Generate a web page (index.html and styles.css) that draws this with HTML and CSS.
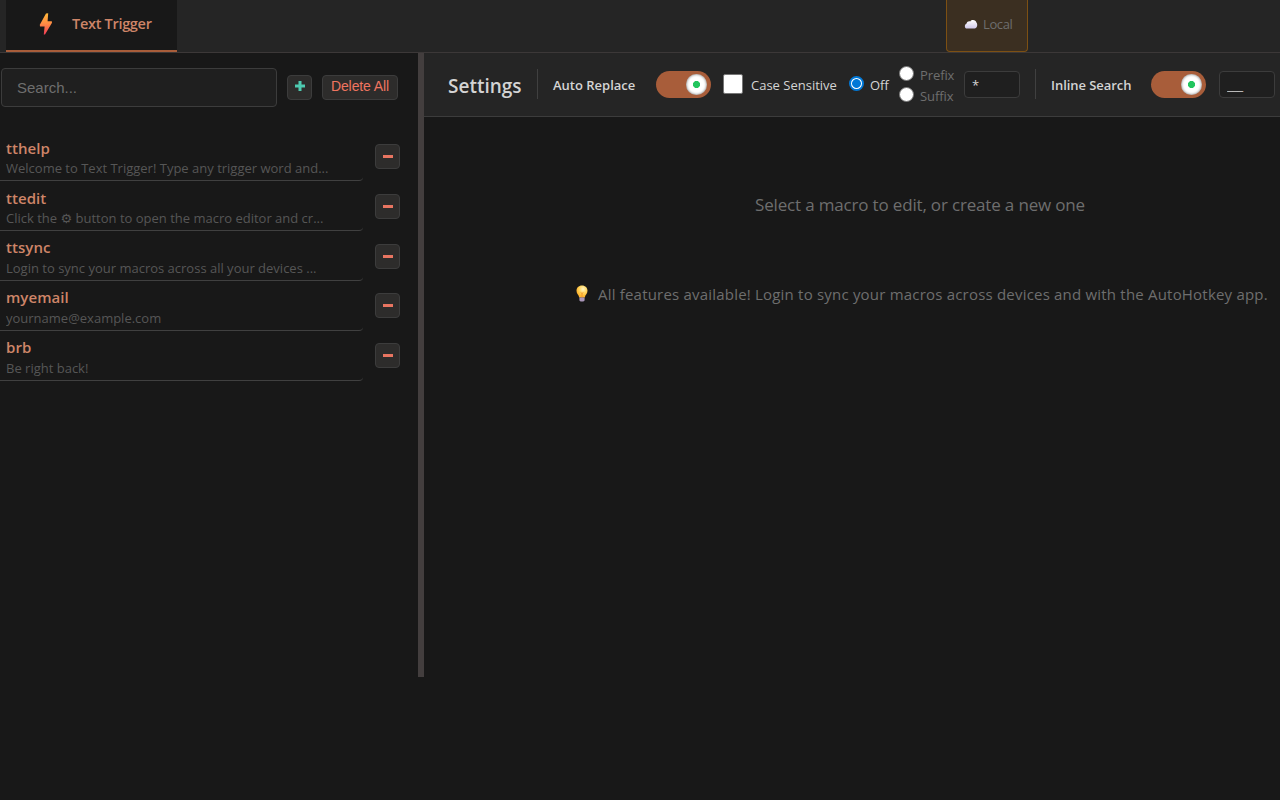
FILE: index.html
```html
<!DOCTYPE html>
<html lang="en">
<head>
  <meta charset="UTF-8">
  <title>Text Trigger</title>
  <link rel="stylesheet" href="styles.css">
</head>
<body>

  <header class="topbar">
    <div class="tab active">
      <svg class="bolt" width="14" height="22" viewBox="0 0 14 22">
        <defs>
          <linearGradient id="boltFill" x1="0" y1="0" x2="0" y2="1">
            <stop offset="0" stop-color="#ffb938"/>
            <stop offset="0.5" stop-color="#ff8a45"/>
            <stop offset="1" stop-color="#f23a56"/>
          </linearGradient>
        </defs>
        <path d="M7 0.4 L9.2 0.2 L8.6 8.2 H12.8 L13 9.8 L6 21.6 L4.8 21.4 L5.6 13.4 H1 L0.8 11.8 Z" fill="url(#boltFill)"/>
      </svg>
      <span class="tab-title">Text Trigger</span>
    </div>
    <div class="status">
      <svg width="14" height="10" viewBox="0 0 14 10">
        <defs>
          <linearGradient id="cloudFill" x1="0" y1="0" x2="0" y2="1">
            <stop offset="0" stop-color="#ffffff"/>
            <stop offset="1" stop-color="#cfc8ea"/>
          </linearGradient>
        </defs>
        <path d="M3 9.5 C0.3 9.5 0.2 5.2 2.6 4.4 C3 2.2 5.2 1.8 6.2 2.4 C7.6 0.2 12 0.6 12.4 3.6 C14 5.4 13.2 9.5 10.6 9.5 Z" fill="url(#cloudFill)"/>
      </svg>
      <span>Local</span>
    </div>
  </header>

  <main class="layout">
    <aside class="sidebar">
      <div class="toolbar">
        <input type="text" class="search" placeholder="Search...">
        <button class="btn add" aria-label="Add">
          <svg width="10" height="10" viewBox="0 0 10 10"><path d="M0 3.5H3.5V0H6.5V3.5H10V6.5H6.5V10H3.5V6.5H0Z" fill="#4ec9b0"/></svg>
        </button>
        <button class="btn delete-all">Delete All</button>
      </div>

      <ul class="macros">
        <li class="macro">
          <div class="macro-info">
            <div class="trigger">tthelp</div>
            <div class="preview">Welcome to Text Trigger! Type any trigger word and...</div>
          </div>
          <button class="btn remove" aria-label="Remove"><span></span></button>
        </li>
        <li class="macro">
          <div class="macro-info">
            <div class="trigger">ttedit</div>
            <div class="preview">Click the <span class="gear">⚙</span> button to open the macro editor and cr...</div>
          </div>
          <button class="btn remove" aria-label="Remove"><span></span></button>
        </li>
        <li class="macro">
          <div class="macro-info">
            <div class="trigger">ttsync</div>
            <div class="preview">Login to sync your macros across all your devices ...</div>
          </div>
          <button class="btn remove" aria-label="Remove"><span></span></button>
        </li>
        <li class="macro">
          <div class="macro-info">
            <div class="trigger">myemail</div>
            <div class="preview">yourname@example.com</div>
          </div>
          <button class="btn remove" aria-label="Remove"><span></span></button>
        </li>
        <li class="macro">
          <div class="macro-info">
            <div class="trigger">brb</div>
            <div class="preview">Be right back!</div>
          </div>
          <button class="btn remove" aria-label="Remove"><span></span></button>
        </li>
      </ul>
    </aside>

    <div class="resizer"></div>

    <section class="editor">
      <div class="settings">
        <h2>Settings</h2>
        <div class="divider"></div>
        <span class="setting-name replace">Auto Replace</span>
        <div class="toggle"><div class="knob"></div></div>
        <label class="case"><span class="checkbox"></span><span>Case Sensitive</span></label>
        <label class="option off"><span class="radio checked"></span><span>Off</span></label>
        <div class="affix">
          <label class="option"><span class="radio"></span><span>Prefix</span></label>
          <label class="option"><span class="radio"></span><span>Suffix</span></label>
        </div>
        <input type="text" class="symbol" value="*">
        <div class="divider second"></div>
        <span class="setting-name inline">Inline Search</span>
        <div class="toggle"><div class="knob"></div></div>
        <input type="text" class="symbol last" value="___">
      </div>

      <div class="empty">
        <p class="empty-title">Select a macro to edit, or create a new one</p>
        <p class="empty-hint">
          <svg width="12" height="18" viewBox="0 0 12 18">
            <defs>
              <radialGradient id="bulbFill" cx="0.6" cy="0.3" r="0.6">
                <stop offset="0" stop-color="#fff6c4"/>
                <stop offset="0.6" stop-color="#ffd35a"/>
                <stop offset="1" stop-color="#ffb52e"/>
              </radialGradient>
            </defs>
            <path d="M6 0.5 C9.4 0.5 11.5 2.8 11.5 5.8 C11.5 8.8 9.3 9.6 8.8 12.5 H3.2 C2.7 9.6 0.5 8.8 0.5 5.8 C0.5 2.8 2.6 0.5 6 0.5 Z" fill="url(#bulbFill)"/>
            <path d="M4.6 7.5 L6 8.5 L7.4 7.5 M6 8.5 V12.5" stroke="#f29a2e" fill="none"/>
            <path d="M3.4 12.5 H8.6 V15.4 L7.4 16.6 H4.6 L3.4 15.4 Z" fill="#a995b8"/>
          </svg>
          <span>All features available! Login to sync your macros across devices and with the AutoHotkey app.</span>
        </p>
      </div>
    </section>
  </main>

</body>
</html>
```
FILE: styles.css
```css
* {
  margin: 0;
  padding: 0;
  box-sizing: border-box;
}

body {
  height: 100vh;
  overflow: hidden;
  font-family: 'Segoe UI', 'Open Sans', sans-serif;
  background-color: #181818;
  color: #d4d4d4;
}

.topbar {
  display: flex;
  align-items: flex-start;
  justify-content: space-between;
  height: 53px;
  padding: 0 252px 0 6px;
  background-color: #252525;
  border-bottom: 1px solid #3c3838;
}

.tab {
  display: flex;
  align-items: center;
  width: 171px;
  height: 52px;
  padding: 0 0 3px 33px;
  background-color: #181818;
  border-bottom: 2px solid #a85d3a;
}

.tab-title {
  margin-left: 19px;
  font-size: 14.5px;
  font-weight: 600;
  letter-spacing: -0.3px;
  color: #ce8568;
  white-space: nowrap;
}

.status {
  display: flex;
  align-items: center;
  gap: 5px;
  width: 82px;
  height: 52px;
  padding: 0 0 3px 17px;
  font-size: 13px;
  letter-spacing: -0.4px;
  color: #6e6e6e;
  background-color: #3b2f21;
  border: 1px solid #7d5013;
  border-top: none;
  border-radius: 0 0 4px 4px;
}

.layout {
  display: flex;
  height: 624px;
}

.sidebar {
  width: 418px;
  flex-shrink: 0;
}

.toolbar {
  display: flex;
  align-items: center;
  gap: 10px;
  padding: 15px 0 0 1px;
}

.search {
  width: 276px;
  height: 39px;
  padding: 0 15px;
  font-family: 'Liberation Sans', Arial, sans-serif;
  font-size: 15px;
  color: #d4d4d4;
  background-color: #1f1f1f;
  border: 1px solid #3c3c3c;
  border-radius: 4px;
}

.search::placeholder {
  color: #6e6e6e;
}

.btn {
  display: flex;
  align-items: center;
  justify-content: center;
  width: 25px;
  height: 25px;
  background-color: #2d2c2b;
  border: 1px solid #3c3c3c;
  border-radius: 4px;
}

.add svg {
  margin-bottom: 3px;
}

.delete-all {
  width: 76px;
  padding-bottom: 3px;
  font-family: 'Liberation Sans', Arial, sans-serif;
  font-size: 14px;
  letter-spacing: -0.1px;
  color: #f07560;
  white-space: nowrap;
}

.macros {
  list-style: none;
  margin-top: 24.3px;
}

.macro {
  display: flex;
  align-items: center;
  height: 49.9px;
}

.macro-info {
  width: 363px;
  height: 100%;
  padding: 6.4px 6px 0;
  border-bottom: 1px solid #404040;
  border-radius: 0 0 4px 0;
}

.trigger {
  height: 20px;
  font-size: 15px;
  font-weight: 600;
  line-height: 20px;
  letter-spacing: 0.05px;
  color: #ce8568;
}

.preview {
  height: 17px;
  margin-top: 1.3px;
  overflow: hidden;
  font-size: 13px;
  line-height: 18px;
  color: #565656;
  white-space: nowrap;
}

.gear {
  font-family: 'DejaVu Sans', sans-serif;
}

.remove {
  margin-left: 12px;
}

.remove span {
  width: 10px;
  height: 3px;
  background-color: #e87561;
}

.resizer {
  width: 6px;
  flex-shrink: 0;
  background-color: #433e3e;
}

.editor {
  flex: 1;
  min-width: 0;
}

.settings {
  display: flex;
  align-items: center;
  height: 64px;
  padding-left: 24px;
  background-color: #252525;
  border-bottom: 1px solid #3c3c3c;
  font-size: 13px;
  white-space: nowrap;
}

.settings > * {
  flex-shrink: 0;
}

.settings h2 {
  width: 89px;
  padding-top: 2px;
  font-size: 19px;
  font-weight: 600;
}

.divider {
  width: 1px;
  height: 30px;
  margin: 0 15px 1px 0;
  background-color: #404040;
}

.divider.second {
  margin-left: 15px;
}

.setting-name {
  font-weight: 600;
}

.replace {
  width: 103px;
}

.inline {
  width: 100px;
  letter-spacing: -0.05px;
}

.toggle {
  display: flex;
  align-items: center;
  justify-content: flex-end;
  width: 55px;
  height: 27px;
  padding-right: 4px;
  background-color: #a85d3a;
  border-radius: 14px;
}

.knob {
  width: 21px;
  height: 21px;
  background: radial-gradient(circle, #22c55e 3.2px, #fff 3.9px);
  border-radius: 50%;
  box-shadow: inset 0 0 3px rgba(0, 0, 0, 0.6);
}

.case {
  display: flex;
  align-items: center;
  gap: 8px;
  width: 126px;
  margin-left: 12px;
}

.checkbox {
  width: 20px;
  height: 20px;
  margin-bottom: 2px;
  background-color: #fff;
  border: 1px solid #767676;
  border-radius: 2px;
}

.option {
  display: flex;
  align-items: center;
  gap: 6px;
  height: 21px;
}

.radio {
  width: 15px;
  height: 15px;
  margin-bottom: 3px;
  background-color: #fff;
  border: 1px solid #767676;
  border-radius: 50%;
}

.radio.checked {
  border: 2px solid #0078d7;
  background: radial-gradient(circle, #0078d7 4px, #fff 4.8px);
}

.off {
  width: 50px;
}

.affix {
  width: 65px;
  padding-top: 2px;
  letter-spacing: -0.1px;
  color: #6e6e6e;
}

.symbol {
  width: 56px;
  height: 27px;
  padding: 0 7px;
  font-family: 'Segoe UI', 'Open Sans', sans-serif;
  font-size: 13px;
  color: #d4d4d4;
  background-color: #1f1f1f;
  border: 1px solid #3c3c3c;
  border-radius: 4px;
}

.symbol.last {
  margin-left: 13px;
  letter-spacing: -0.4px;
}

.empty {
  padding-top: 75px;
  text-align: center;
  color: #6e6e6e;
}

.empty-title {
  margin-left: 136px;
  font-size: 17px;
  line-height: 26px;
  letter-spacing: -0.17px;
}

.empty-hint {
  display: flex;
  align-items: center;
  gap: 10px;
  margin-top: 63px;
  padding-left: 152px;
  font-size: 15px;
  line-height: 26px;
  letter-spacing: 0.2px;
  white-space: nowrap;
}
```
